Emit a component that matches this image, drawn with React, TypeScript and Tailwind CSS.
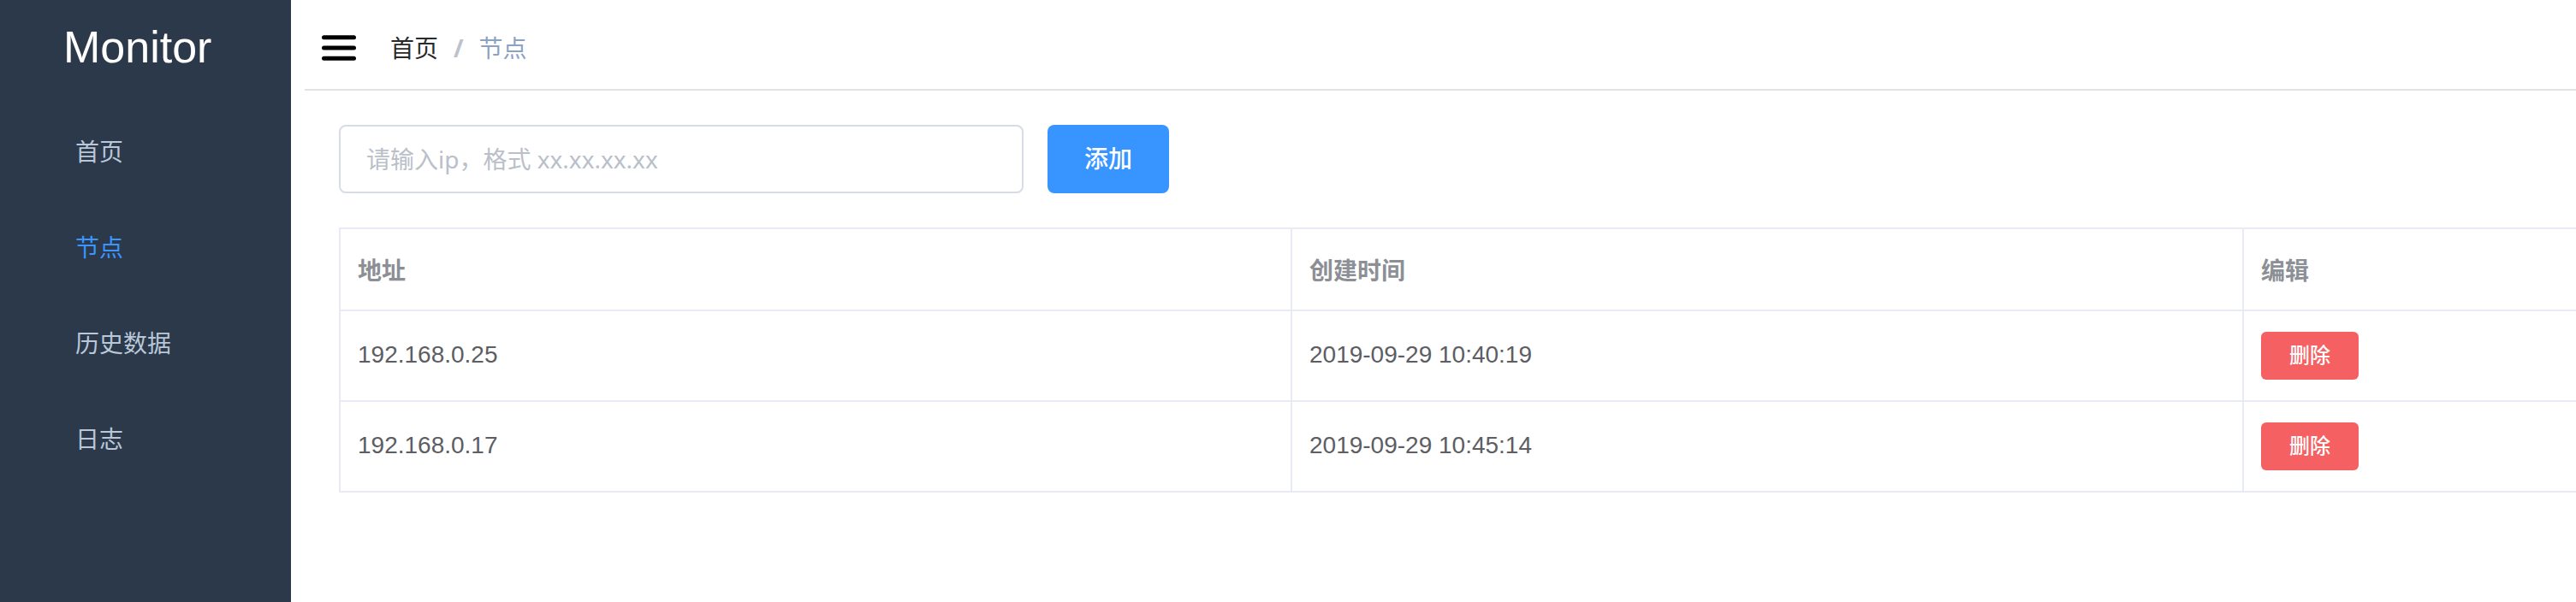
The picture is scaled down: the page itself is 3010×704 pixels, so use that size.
const menu = [
  { label: '首页', active: false },
  { label: '节点', active: true },
  { label: '历史数据', active: false },
  { label: '日志', active: false },
];

const nodes = [
  { ip: '192.168.0.25', created: '2019-09-29 10:40:19' },
  { ip: '192.168.0.17', created: '2019-09-29 10:45:14' },
];

function Sidebar() {
  return (
    <aside className="w-[340px] shrink-0 bg-[#2b394b]">
      <div className="h-[123px] pt-[25px] pl-[74px] text-[52px] leading-[60px] text-white">
        Monitor
      </div>
      <nav>
        {menu.map((item) => (
          <a
            key={item.label}
            href="#"
            className={
              item.active
                ? 'flex h-[112px] items-center pl-[88px] text-[#3a95ff]'
                : 'flex h-[112px] items-center pl-[88px] text-[#b9c7d8]'
            }
          >
            {item.label}
          </a>
        ))}
      </nav>
    </aside>
  );
}

function Header() {
  return (
    <header className="ml-4 flex h-[106px] items-center border-b-2 border-[#e2e2e2] pl-5">
      <button type="button" aria-label="菜单" className="mt-2">
        <svg width="40" height="30" viewBox="0 0 40 30" className="block">
          <rect x="0" y="0.2" width="40" height="5" rx="2.5" />
          <rect x="0" y="12.5" width="40" height="5" rx="2.5" />
          <rect x="0" y="24.8" width="40" height="5" rx="2.5" />
        </svg>
      </button>
      <nav className="mt-3 ml-10 flex items-center">
        <a href="#" className="text-[#2a2a2a]">首页</a>
        <span className="mx-[18px] pb-1 font-['Open_Sans',sans-serif] font-bold text-[#bcc2cd]">/</span>
        <span className="text-[#8ba2c0]">节点</span>
      </nav>
    </header>
  );
}

function NodeTable() {
  const th = 'h-[96px] border-r-2 border-b-2 border-[#e8ebf5] px-5 pt-1.5 pb-0 text-left font-bold text-[#8c8f96]';
  const td = 'h-[106px] border-r-2 border-b-2 border-[#e8ebf5] px-5 pt-0 pb-0.5';
  return (
    <table className="mt-10 w-full table-fixed border-separate border-spacing-0 border-t-2 border-l-2 border-[#e8ebf5] text-[#5c5e63]">
      <colgroup>
        <col className="w-[1112px]" />
        <col className="w-[1112px]" />
        <col />
      </colgroup>
      <thead>
        <tr>
          <th className={th}>地址</th>
          <th className={th}>创建时间</th>
          <th className="h-[96px] border-b-2 border-[#e8ebf5] px-5 pt-1.5 pb-0 text-left font-bold text-[#8c8f96]">编辑</th>
        </tr>
      </thead>
      <tbody>
        {nodes.map((node) => (
          <tr key={node.ip}>
            <td className={td}>{node.ip}</td>
            <td className={td}>{node.created}</td>
            <td className="h-[106px] border-b-2 border-[#e8ebf5] px-5">
              <button
                type="button"
                className="block h-14 w-[114px] rounded-md bg-[#f56063] text-center text-2xl font-medium text-white"
              >
                删除
              </button>
            </td>
          </tr>
        ))}
      </tbody>
    </table>
  );
}

export default function App() {
  return (
    <div className="flex min-h-screen bg-white font-['Liberation_Sans','Noto_Sans_CJK_SC',sans-serif] text-[28px] leading-10">
      <Sidebar />
      <div className="min-w-0 flex-1">
        <Header />
        <main className="pt-10 pl-14">
          <form className="flex gap-7" onSubmit={(e) => e.preventDefault()}>
            <input
              type="text"
              aria-label="ip"
              placeholder="请输入ip，格式 xx.xx.xx.xx"
              className="h-20 w-[800px] rounded-lg border-2 border-[#d8dce7] px-[30px] font-['Noto_Sans','Noto_Sans_CJK_SC',sans-serif] outline-none placeholder:text-[#babfca]"
            />
            <button type="submit" className="h-20 w-[142px] rounded-lg bg-[#3894ff] pt-0.5 font-medium text-white">
              添加
            </button>
          </form>
          <NodeTable />
        </main>
      </div>
    </div>
  );
}
